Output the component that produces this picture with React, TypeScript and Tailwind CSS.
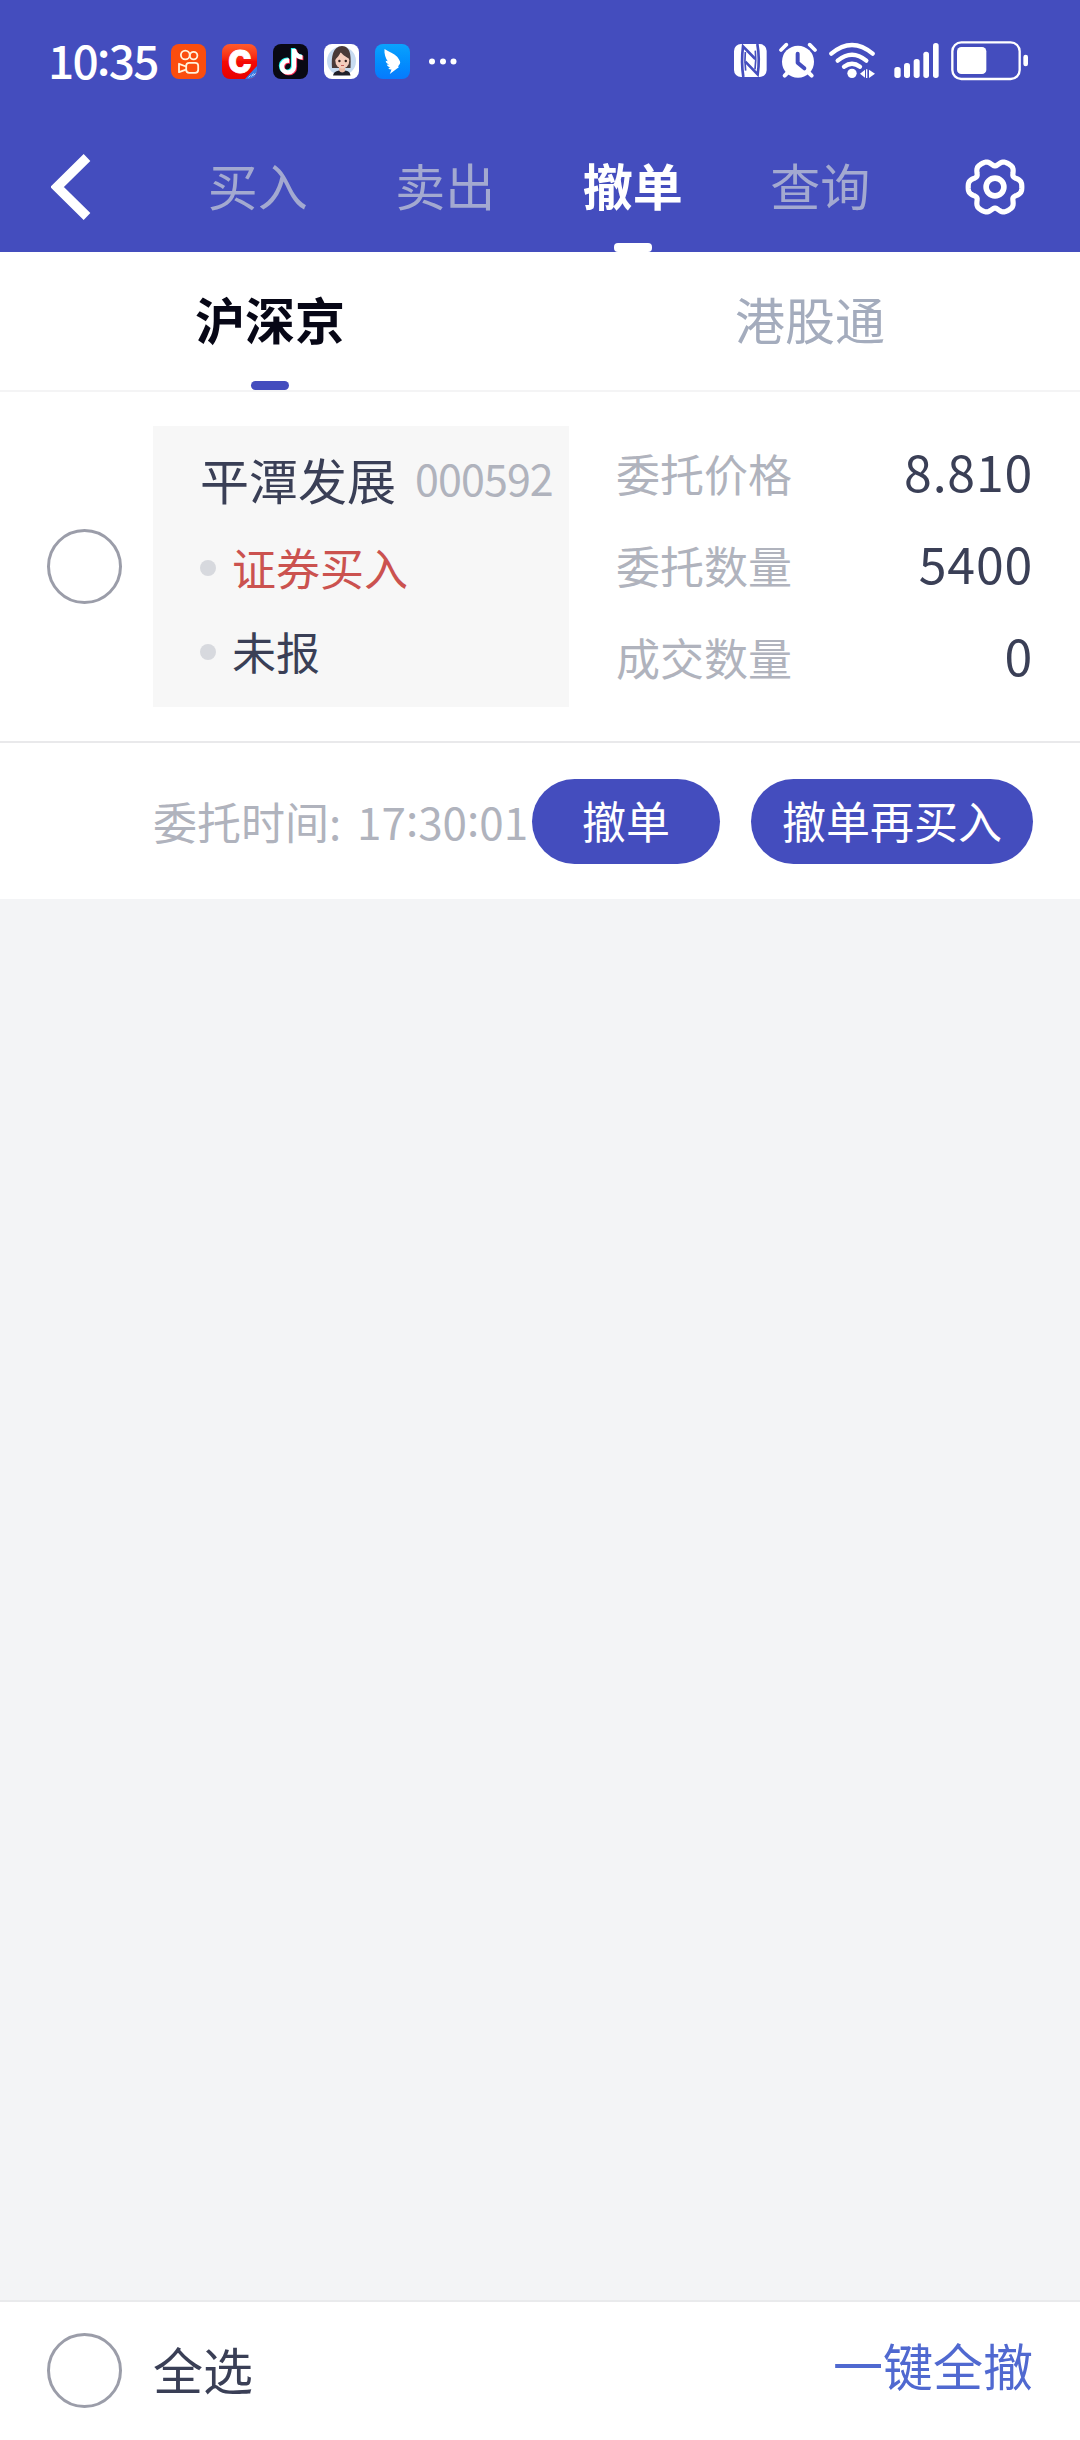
import type { ReactNode } from 'react'
import clsx from 'clsx'
import { FaTiktok } from 'react-icons/fa6'

const TABS = ['买入', '卖出', '撤单', '查询']

const DETAILS = [
  { label: '委托价格', value: '8.810' },
  { label: '委托数量', value: '5400' },
  { label: '成交数量', value: '0' },
]

// six-lobed outline of the settings icon
const GEAR_PATH =
  Array.from({ length: 120 }, (_, i) => {
    const t = (i / 120) * Math.PI * 2
    const r = 24.7 + 2.9 * Math.cos(6 * t) - 0.8 * Math.cos(12 * t)
    return `${i ? 'L' : 'M'}${(30 + r * Math.cos(t)).toFixed(2)} ${(30 + r * Math.sin(t)).toFixed(2)}`
  }).join('') + 'Z'

export default function App() {
  return (
    <main className="flex h-[2440px] w-[1080px] flex-col overflow-hidden bg-[#f3f4f6] font-['Noto_Sans_CJK_SC',sans-serif] text-[#3a3f56]">
      <header className="h-[252px] bg-[#444dbe]">
        <StatusBar />
        <NavBar />
      </header>
      <MarketTabs />
      <OrderCard />
      <div className="flex-1" />
      <SelectAllBar />
    </main>
  )
}

function StatusBar() {
  return (
    <div className="flex h-[122px] items-center pl-[48px] text-white">
      <span className="w-[123px] pb-[8px] text-[46px] leading-[50px] font-medium tracking-[-1.8px] whitespace-nowrap">
        10<span className="align-[4px]">:</span>35
      </span>
      <div className="flex items-center gap-4">
        <AppIcon className="bg-[#fb4d0e]">
          <g fill="none" stroke="#fff3dc" strokeWidth="1.8">
            <circle cx="14.3" cy="11" r="4.4" />
            <circle cx="22.6" cy="11.6" r="3.8" />
            <rect x="15.2" y="18.8" width="12" height="10" rx="3" />
            <path d="M15 22.5 8 19.8v8.4l7-2.6" strokeLinejoin="round" />
          </g>
        </AppIcon>
        <AppIcon className="bg-linear-to-b from-[#ff5a2c] via-[#f50a05] to-[#e60000]">
          <text
            x="17.8"
            y="28.6"
            textAnchor="middle"
            fontSize="31"
            fontWeight="900"
            fontFamily="Inter, sans-serif"
            fill="#fff"
            stroke="#fff"
            strokeWidth="0.8"
          >
            C
          </text>
          <path d="M35 22v13H23z" fill="#3a7ae4" />
          <path d="m26.5 33.5 2-2m1 1 2-3m0 2 2-2" stroke="#c8dcff" strokeWidth="1" fill="none" />
        </AppIcon>
        <AppIcon className="bg-[#090914]">
          <FaTiktok x="4.2" y="4" size="26" color="#25f4ee" />
          <FaTiktok x="6" y="5.6" size="26" color="#fe2c55" />
          <FaTiktok x="5.1" y="4.8" size="26" color="#fff" />
        </AppIcon>
        <AppIcon className="bg-white">
          <circle cx="17.5" cy="17" r="14.5" fill="#c7dbf1" />
          <path d="M8 24C7 12 9 2.5 18 2c9 .5 9 10 8.5 22H8z" fill="#493a38" />
          <path d="M15 21h6v8h-6z" fill="#e9b9a5" />
          <ellipse cx="18.3" cy="16.5" rx="7" ry="8.3" fill="#f4cdbd" />
          <path d="M10 17c2-3 5-4 6.5-9 3 4 6.5 5 9 7C26 6 22 4 18 4s-9 5-8 13z" fill="#493a38" />
          <circle cx="15.4" cy="17" r="1.2" fill="#33211f" />
          <circle cx="21.8" cy="17" r="1.2" fill="#33211f" />
          <path d="M17 21.5h3" stroke="#c55f5b" />
          <path d="M9 31.5c1-4 4-4.5 6-5 1.5 2.5 5 2.5 6.5 0 2 .5 4.5 1 5 5z" fill="#20202a" />
        </AppIcon>
        <AppIcon className="bg-linear-to-b from-[#0ba2fd] to-[#077afd]">
          <path
            d="M9.5 5c4.5 2.8 9.7 4.6 12.4 7.5 1.5 1.6 3.4 4.7 3.3 6.2-.1 1.3-1.5 2.6-2.4 4h1.6L14.8 30l1.7-4.4c-1.6-.1-2.7-.7-3.1-1.7l2-.4c-2-.6-3.3-1.6-3.6-2.9l2.3.1c-2.2-1.2-3.3-2.3-3.4-4l2 .6C10.6 14.2 9 10 9.5 5z"
            fill="#fff"
          />
        </AppIcon>
        <svg width="34" height="35" viewBox="0 0 34 35" fill="currentColor" className="ml-0.5">
          <circle cx="4" cy="17.5" r="3" />
          <circle cx="15" cy="17.5" r="3" />
          <circle cx="25.5" cy="17.5" r="3" />
        </svg>
      </div>

      <div className="mr-[52px] ml-auto flex items-center gap-3 pb-[1px]">
        {/* NFC */}
        <svg width="33" height="41" viewBox="72 60 99 123" fill="currentColor">
          <rect x="72" y="72" width="98" height="99" rx="21" />
          <g fill="none" stroke="#444dbe">
            <path d="M100 171q-7-45-1-92l37 38" strokeWidth="8" />
            <path d="M142 72q8 45 1 91l-37-38" strokeWidth="8" />
            <path d="M106 96q-3 28 1 56" strokeWidth="5" />
            <path d="M136 92q3 28-1 56" strokeWidth="5" />
          </g>
        </svg>
        {/* alarm */}
        <svg width="38" height="41" viewBox="207 60 114 123" fill="none" stroke="currentColor" strokeLinecap="round">
          <circle cx="264" cy="125" r="48" fill="currentColor" stroke="none" />
          <path d="m213 90 16-16M315 90l-16-16" strokeWidth="11" />
          <path d="m224 167 14-14M305 167l-14-14" strokeWidth="12" />
          <path d="M263 101v27l20 17" stroke="#444dbe" strokeWidth="12" strokeLinejoin="round" />
        </svg>
        {/* wifi */}
        <svg width="46" height="41" viewBox="357 60 138 123" fill="none" stroke="currentColor" strokeLinecap="round">
          <path d="M364 101q62-52 124 0" strokeWidth="13" />
          <path d="M383 122q43-36 86 0" strokeWidth="13" />
          <path d="M402 140q24-18 48 0" strokeWidth="13" />
          <circle cx="426" cy="160" r="14" fill="currentColor" stroke="none" />
          <path d="m450 161 15-12v24zM477 149l18 12-18 13zM468 148h4v26h-4z" fill="currentColor" stroke="none" />
        </svg>
        {/* signal */}
        <svg width="45" height="41" viewBox="552 60 135 123" fill="currentColor" className="ml-[7px]">
          <rect x="553" y="141" width="19" height="33" rx="8" />
          <rect x="582" y="129" width="18" height="45" rx="8" />
          <rect x="611" y="117" width="18" height="57" rx="8" />
          <rect x="640" y="95" width="17" height="79" rx="8" />
          <rect x="669" y="69" width="17" height="105" rx="8" />
        </svg>
        {/* battery */}
        <svg width="77" height="41" viewBox="723 60 231 123" fill="currentColor">
          <rect x="727" y="67" width="202" height="110" rx="27" fill="none" stroke="currentColor" strokeWidth="7" />
          <rect x="741" y="81" width="88" height="81" rx="13" />
          <rect x="940" y="104" width="14" height="35" rx="7" />
        </svg>
      </div>
    </div>
  )
}

function AppIcon({ className, children }: { className: string; children: ReactNode }) {
  return (
    <div className={clsx('size-[35px] overflow-hidden rounded-[8px]', className)}>
      <svg width="35" height="35" viewBox="0 0 35 35">
        {children}
      </svg>
    </div>
  )
}

function NavBar() {
  return (
    <nav className="flex h-[130px] text-white">
      <svg width="40" height="66" viewBox="0 0 40 66" className="mt-8 ml-[51px]">
        <path d="M36 3.5 6 33l30 29.5" fill="none" stroke="currentColor" strokeWidth="9.5" />
      </svg>
      <div className="ml-[73px] grid w-[750px] grid-cols-4">
        {TABS.map((tab) => (
          <div
            key={tab}
            className={clsx(
              'flex flex-col items-center pt-[26px] text-[50px] leading-[72px]',
              tab === '撤单' ? 'font-bold' : 'text-[#a3a9d0]',
            )}
          >
            {tab}
            {tab === '撤单' && <span className="mt-[23px] h-[9px] w-[38px] rounded-[4px] bg-white" />}
          </div>
        ))}
      </div>
      <svg width="60" height="60" viewBox="0 0 60 60" fill="none" stroke="currentColor" className="mt-[35px] ml-[51px]">
        <path d={GEAR_PATH} strokeWidth="5.2" strokeLinejoin="round" />
        <circle cx="30" cy="30" r="8.9" strokeWidth="5.6" />
      </svg>
    </nav>
  )
}

function MarketTabs() {
  return (
    <div className="grid h-[140px] grid-cols-2 border-b-2 border-[#f4f4f5] bg-white text-[50px] leading-[72px]">
      <div className="flex flex-col items-center pt-[30px] font-bold text-[#070716]">
        沪深京
        <span className="mt-[27px] h-[9px] w-[38px] rounded-full bg-[#444dbe]" />
      </div>
      <div className="pt-[30px] text-center text-[#a4acbd]">港股通</div>
    </div>
  )
}

function OrderCard() {
  return (
    <section className="bg-white">
      <div className="flex h-[351px] items-center border-b-2 border-[#e9e9eb] px-[47px]">
        <Radio />
        <div className="ml-[31px] h-[281px] w-[416px] bg-[#f7f7f7] pl-[47px]">
          <div className="flex h-[106px] items-center whitespace-nowrap">
            <span className="text-[49px] leading-[72px]">平潭发展</span>
            <span className="ml-[19px] pb-[4px] text-[43px] leading-[60px] tracking-[-0.9px] text-[#b0b3bd]">
              000592
            </span>
          </div>
          <StatusLine className="mt-[3px] text-[#cb524f]">证券买入</StatusLine>
          <StatusLine className="mt-5">未报</StatusLine>
        </div>
        <dl className="ml-[47px] flex-1">
          {DETAILS.map(({ label, value }) => (
            <div key={label} className="flex h-[92px] items-center justify-between pb-[3px]">
              <dt className="text-[44px] leading-[64px] text-[#b0b3bd]">{label}</dt>
              <dd className="pb-[6px] text-[50px] leading-[64px] tracking-[0.8px]">{value}</dd>
            </div>
          ))}
        </dl>
      </div>
      <div className="flex h-[156px] items-center pr-[47px] pl-[153px]">
        <p className="w-[379px] pb-[5px] text-[44px] leading-[64px] whitespace-nowrap text-[#b0b3bd]">
          委托时间:<span className="ml-[6px]"> 17</span>
          <span className="align-[4px]">:</span>30<span className="align-[4px]">:</span>01
        </p>
        <button className="h-[85px] w-[188px] rounded-full bg-[#444dbe] pb-[2px] text-[44px] leading-[64px] text-white">
          撤单
        </button>
        <button className="ml-[31px] h-[85px] w-[282px] rounded-full bg-[#444dbe] pb-[2px] text-[44px] leading-[64px] text-white">
          撤单再买入
        </button>
      </div>
    </section>
  )
}

function StatusLine({ className, children }: { className?: string; children: ReactNode }) {
  return (
    <div className={clsx('flex h-16 items-center text-[44px] leading-[64px]', className)}>
      <span className="mt-[2px] mr-4 size-4 rounded-full bg-[#d7d9de]" />
      {children}
    </div>
  )
}

function SelectAllBar() {
  return (
    <footer className="flex h-[140px] items-center border-t-2 border-[#e9eaec] bg-white px-[47px] pb-[2px] text-[50px] leading-[72px]">
      <Radio />
      <span className="ml-[31px] pb-[4px]">全选</span>
      <button className="ml-auto pb-[12px] text-[#5069d0]">一键全撤</button>
    </footer>
  )
}

function Radio() {
  return <span className="size-[75px] shrink-0 rounded-full border-3 border-[#9b9da9]" />
}
